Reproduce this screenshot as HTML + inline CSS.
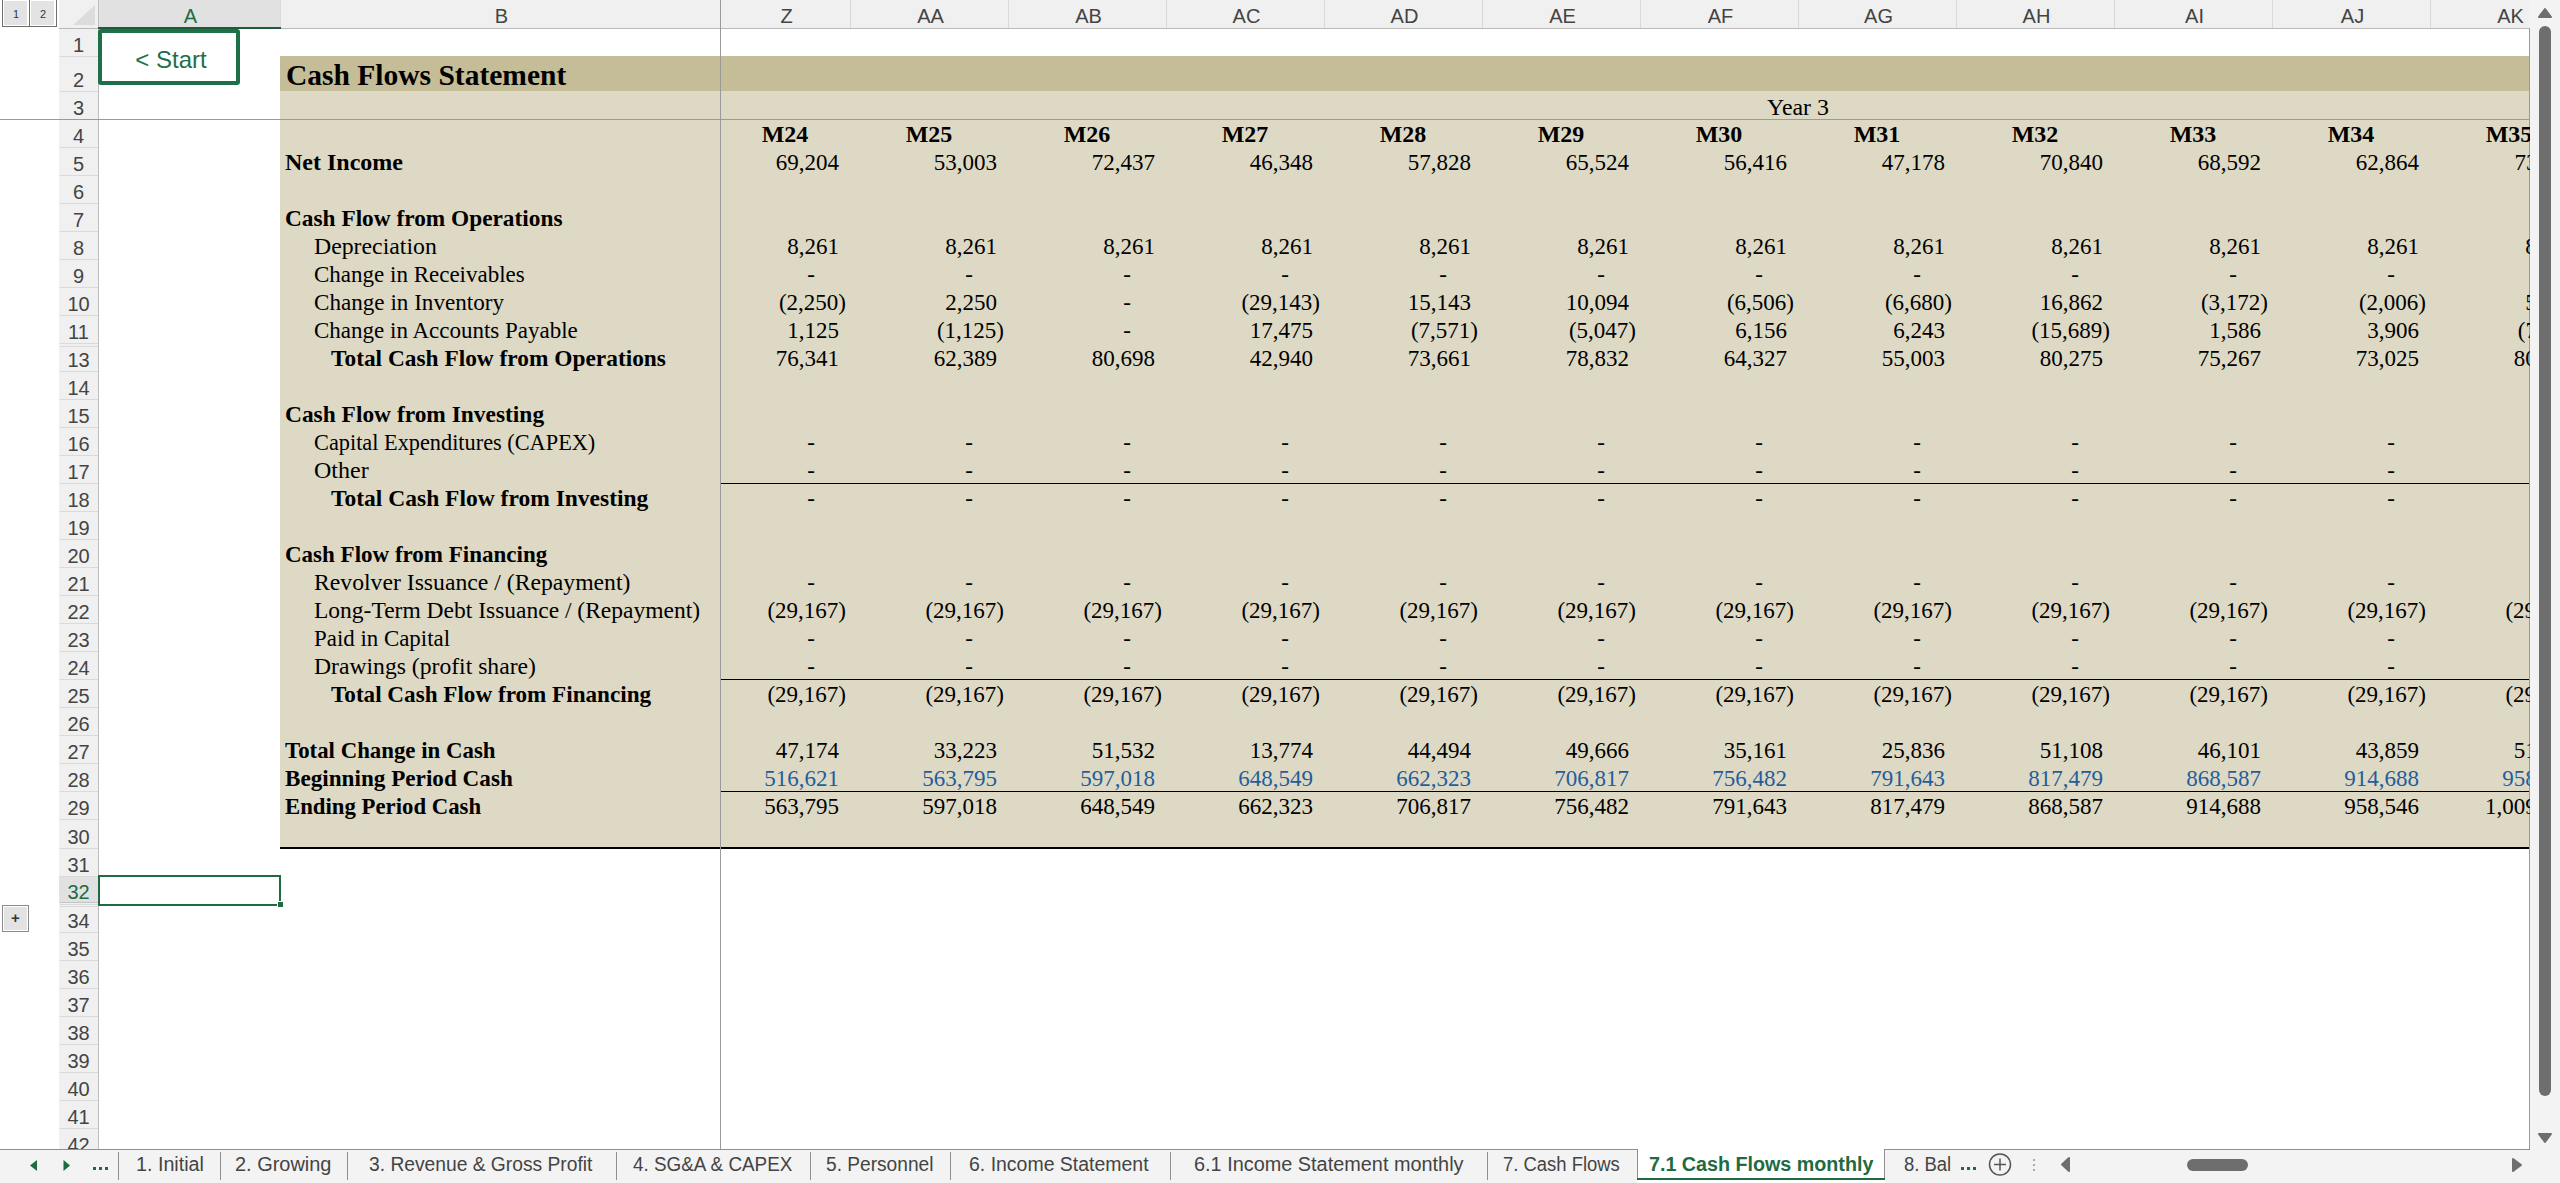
<!DOCTYPE html><html><head><meta charset='utf-8'><style>
*{margin:0;padding:0;box-sizing:border-box}
html,body{width:2560px;height:1183px;overflow:hidden;background:#fff;position:relative}
.a{position:absolute}
.sans{font-family:"Liberation Sans",sans-serif}
.serif{font-family:"Liberation Serif",serif}
.hdr{font-family:"Liberation Sans",sans-serif;font-size:20px;color:#444;white-space:nowrap;line-height:20px}
.cell{font-family:"Liberation Serif",serif;font-size:23px;color:#000;white-space:pre;line-height:24px}
.b{font-weight:bold}
.tab{font-family:"Liberation Sans",sans-serif;font-size:19.5px;color:#444;white-space:nowrap;line-height:20px}
</style></head><body>
<div class='a' style='left:59px;top:0;width:2471px;height:28px;background:#f0f0f0'></div>
<div class='a' style='left:98px;top:0;width:182px;height:28px;background:#e1e1e1'></div>
<div class='a' style='left:59px;top:28px;width:2471px;height:1px;background:#b9b9b9'></div>
<div class='a' style='left:98px;top:27px;width:183px;height:2px;background:#1e5b3a'></div>
<div class='a' style='left:98px;top:0;width:1px;height:28px;background:#d9d9d9'></div>
<div class='a' style='left:280px;top:0;width:1px;height:28px;background:#d9d9d9'></div>
<div class='a' style='left:850px;top:0;width:1px;height:28px;background:#d9d9d9'></div>
<div class='a' style='left:1008px;top:0;width:1px;height:28px;background:#d9d9d9'></div>
<div class='a' style='left:1166px;top:0;width:1px;height:28px;background:#d9d9d9'></div>
<div class='a' style='left:1324px;top:0;width:1px;height:28px;background:#d9d9d9'></div>
<div class='a' style='left:1482px;top:0;width:1px;height:28px;background:#d9d9d9'></div>
<div class='a' style='left:1640px;top:0;width:1px;height:28px;background:#d9d9d9'></div>
<div class='a' style='left:1798px;top:0;width:1px;height:28px;background:#d9d9d9'></div>
<div class='a' style='left:1956px;top:0;width:1px;height:28px;background:#d9d9d9'></div>
<div class='a' style='left:2114px;top:0;width:1px;height:28px;background:#d9d9d9'></div>
<div class='a' style='left:2272px;top:0;width:1px;height:28px;background:#d9d9d9'></div>
<div class='a' style='left:2430px;top:0;width:1px;height:28px;background:#d9d9d9'></div>
<svg class='a' style='left:59px;top:0' width='39' height='28'><polygon points='14,25 36,25 36,5' fill='#dcdcdc'/></svg>
<div class='a hdr' style='left:99.5px;width:182px;top:6px;text-align:center;color:#1e6b41'>A</div>
<div class='a hdr' style='left:281.5px;width:440px;top:6px;text-align:center;color:#444'>B</div>
<div class='a hdr' style='left:721.5px;width:130px;top:6px;text-align:center;color:#444'>Z</div>
<div class='a hdr' style='left:851.5px;width:158px;top:6px;text-align:center;color:#444'>AA</div>
<div class='a hdr' style='left:1009.5px;width:158px;top:6px;text-align:center;color:#444'>AB</div>
<div class='a hdr' style='left:1167.5px;width:158px;top:6px;text-align:center;color:#444'>AC</div>
<div class='a hdr' style='left:1325.5px;width:158px;top:6px;text-align:center;color:#444'>AD</div>
<div class='a hdr' style='left:1483.5px;width:158px;top:6px;text-align:center;color:#444'>AE</div>
<div class='a hdr' style='left:1641.5px;width:158px;top:6px;text-align:center;color:#444'>AF</div>
<div class='a hdr' style='left:1799.5px;width:158px;top:6px;text-align:center;color:#444'>AG</div>
<div class='a hdr' style='left:1957.5px;width:158px;top:6px;text-align:center;color:#444'>AH</div>
<div class='a hdr' style='left:2115.5px;width:158px;top:6px;text-align:center;color:#444'>AI</div>
<div class='a hdr' style='left:2273.5px;width:158px;top:6px;text-align:center;color:#444'>AJ</div>
<div class='a hdr' style='left:2431.5px;width:158px;top:6px;text-align:center;color:#444'>AK</div>
<div class='a' style='left:2px;top:-1px;width:55px;height:28px;border:1px solid #6f6f6f;background:#fff'></div>
<div class='a' style='left:29px;top:0;width:1px;height:27px;background:#6f6f6f'></div>
<div class='a' style='left:4px;top:1px;width:23px;height:24px;background:#e3e3e3'></div>
<div class='a' style='left:31px;top:1px;width:23px;height:24px;background:#e3e3e3'></div>
<div class='a sans' style='left:3px;top:8px;width:26px;text-align:center;font-size:11px;line-height:12px;color:#333'>1</div>
<div class='a sans' style='left:30px;top:8px;width:26px;text-align:center;font-size:11px;line-height:12px;color:#333'>2</div>
<div class='a' style='left:59px;top:29px;width:39px;height:1120px;background:#f0f0f0'></div>
<div class='a' style='left:98px;top:0;width:1px;height:1149px;background:#bdbdbd'></div>
<div class='a' style='left:59px;top:876px;width:39px;height:27px;background:#e1e1e1'></div>
<div class='a' style='left:60px;top:56px;width:38px;height:1px;background:#dadada'></div>
<div class='a hdr' style='left:59px;width:39px;top:35px;text-align:center;color:#444'>1</div>
<div class='a' style='left:60px;top:91px;width:38px;height:1px;background:#dadada'></div>
<div class='a hdr' style='left:59px;width:39px;top:70px;text-align:center;color:#444'>2</div>
<div class='a' style='left:60px;top:119px;width:38px;height:1px;background:#dadada'></div>
<div class='a hdr' style='left:59px;width:39px;top:98px;text-align:center;color:#444'>3</div>
<div class='a' style='left:60px;top:147px;width:38px;height:1px;background:#dadada'></div>
<div class='a hdr' style='left:59px;width:39px;top:126px;text-align:center;color:#444'>4</div>
<div class='a' style='left:60px;top:175px;width:38px;height:1px;background:#dadada'></div>
<div class='a hdr' style='left:59px;width:39px;top:154px;text-align:center;color:#444'>5</div>
<div class='a' style='left:60px;top:203px;width:38px;height:1px;background:#dadada'></div>
<div class='a hdr' style='left:59px;width:39px;top:182px;text-align:center;color:#444'>6</div>
<div class='a' style='left:60px;top:231px;width:38px;height:1px;background:#dadada'></div>
<div class='a hdr' style='left:59px;width:39px;top:210px;text-align:center;color:#444'>7</div>
<div class='a' style='left:60px;top:259px;width:38px;height:1px;background:#dadada'></div>
<div class='a hdr' style='left:59px;width:39px;top:238px;text-align:center;color:#444'>8</div>
<div class='a' style='left:60px;top:287px;width:38px;height:1px;background:#dadada'></div>
<div class='a hdr' style='left:59px;width:39px;top:266px;text-align:center;color:#444'>9</div>
<div class='a' style='left:60px;top:315px;width:38px;height:1px;background:#dadada'></div>
<div class='a hdr' style='left:59px;width:39px;top:294px;text-align:center;color:#444'>10</div>
<div class='a' style='left:60px;top:343px;width:38px;height:1px;background:#dadada'></div>
<div class='a hdr' style='left:59px;width:39px;top:322px;text-align:center;color:#444'>11</div>
<div class='a' style='left:60px;top:346px;width:38px;height:1px;background:#dadada'></div>
<div class='a' style='left:60px;top:371px;width:38px;height:1px;background:#dadada'></div>
<div class='a hdr' style='left:59px;width:39px;top:350px;text-align:center;color:#444'>13</div>
<div class='a' style='left:60px;top:399px;width:38px;height:1px;background:#dadada'></div>
<div class='a hdr' style='left:59px;width:39px;top:378px;text-align:center;color:#444'>14</div>
<div class='a' style='left:60px;top:427px;width:38px;height:1px;background:#dadada'></div>
<div class='a hdr' style='left:59px;width:39px;top:406px;text-align:center;color:#444'>15</div>
<div class='a' style='left:60px;top:455px;width:38px;height:1px;background:#dadada'></div>
<div class='a hdr' style='left:59px;width:39px;top:434px;text-align:center;color:#444'>16</div>
<div class='a' style='left:60px;top:483px;width:38px;height:1px;background:#dadada'></div>
<div class='a hdr' style='left:59px;width:39px;top:462px;text-align:center;color:#444'>17</div>
<div class='a' style='left:60px;top:511px;width:38px;height:1px;background:#dadada'></div>
<div class='a hdr' style='left:59px;width:39px;top:490px;text-align:center;color:#444'>18</div>
<div class='a' style='left:60px;top:539px;width:38px;height:1px;background:#dadada'></div>
<div class='a hdr' style='left:59px;width:39px;top:518px;text-align:center;color:#444'>19</div>
<div class='a' style='left:60px;top:567px;width:38px;height:1px;background:#dadada'></div>
<div class='a hdr' style='left:59px;width:39px;top:546px;text-align:center;color:#444'>20</div>
<div class='a' style='left:60px;top:595px;width:38px;height:1px;background:#dadada'></div>
<div class='a hdr' style='left:59px;width:39px;top:574px;text-align:center;color:#444'>21</div>
<div class='a' style='left:60px;top:623px;width:38px;height:1px;background:#dadada'></div>
<div class='a hdr' style='left:59px;width:39px;top:602px;text-align:center;color:#444'>22</div>
<div class='a' style='left:60px;top:651px;width:38px;height:1px;background:#dadada'></div>
<div class='a hdr' style='left:59px;width:39px;top:630px;text-align:center;color:#444'>23</div>
<div class='a' style='left:60px;top:679px;width:38px;height:1px;background:#dadada'></div>
<div class='a hdr' style='left:59px;width:39px;top:658px;text-align:center;color:#444'>24</div>
<div class='a' style='left:60px;top:707px;width:38px;height:1px;background:#dadada'></div>
<div class='a hdr' style='left:59px;width:39px;top:686px;text-align:center;color:#444'>25</div>
<div class='a' style='left:60px;top:735px;width:38px;height:1px;background:#dadada'></div>
<div class='a hdr' style='left:59px;width:39px;top:714px;text-align:center;color:#444'>26</div>
<div class='a' style='left:60px;top:763px;width:38px;height:1px;background:#dadada'></div>
<div class='a hdr' style='left:59px;width:39px;top:742px;text-align:center;color:#444'>27</div>
<div class='a' style='left:60px;top:791px;width:38px;height:1px;background:#dadada'></div>
<div class='a hdr' style='left:59px;width:39px;top:770px;text-align:center;color:#444'>28</div>
<div class='a' style='left:60px;top:819px;width:38px;height:1px;background:#dadada'></div>
<div class='a hdr' style='left:59px;width:39px;top:798px;text-align:center;color:#444'>29</div>
<div class='a' style='left:60px;top:848px;width:38px;height:1px;background:#dadada'></div>
<div class='a hdr' style='left:59px;width:39px;top:827px;text-align:center;color:#444'>30</div>
<div class='a' style='left:60px;top:876px;width:38px;height:1px;background:#dadada'></div>
<div class='a hdr' style='left:59px;width:39px;top:855px;text-align:center;color:#444'>31</div>
<div class='a' style='left:60px;top:904px;width:38px;height:1px;background:#dadada'></div>
<div class='a hdr' style='left:59px;width:39px;top:882px;text-align:center;color:#1e6b41'>32</div>
<div class='a' style='left:60px;top:902px;width:38px;height:1px;background:#c4c4c4'></div>
<div class='a' style='left:60px;top:906px;width:38px;height:1px;background:#dadada'></div>
<div class='a' style='left:60px;top:932px;width:38px;height:1px;background:#dadada'></div>
<div class='a hdr' style='left:59px;width:39px;top:911px;text-align:center;color:#444'>34</div>
<div class='a' style='left:60px;top:960px;width:38px;height:1px;background:#dadada'></div>
<div class='a hdr' style='left:59px;width:39px;top:939px;text-align:center;color:#444'>35</div>
<div class='a' style='left:60px;top:988px;width:38px;height:1px;background:#dadada'></div>
<div class='a hdr' style='left:59px;width:39px;top:967px;text-align:center;color:#444'>36</div>
<div class='a' style='left:60px;top:1016px;width:38px;height:1px;background:#dadada'></div>
<div class='a hdr' style='left:59px;width:39px;top:995px;text-align:center;color:#444'>37</div>
<div class='a' style='left:60px;top:1044px;width:38px;height:1px;background:#dadada'></div>
<div class='a hdr' style='left:59px;width:39px;top:1023px;text-align:center;color:#444'>38</div>
<div class='a' style='left:60px;top:1072px;width:38px;height:1px;background:#dadada'></div>
<div class='a hdr' style='left:59px;width:39px;top:1051px;text-align:center;color:#444'>39</div>
<div class='a' style='left:60px;top:1100px;width:38px;height:1px;background:#dadada'></div>
<div class='a hdr' style='left:59px;width:39px;top:1079px;text-align:center;color:#444'>40</div>
<div class='a' style='left:60px;top:1128px;width:38px;height:1px;background:#dadada'></div>
<div class='a hdr' style='left:59px;width:39px;top:1107px;text-align:center;color:#444'>41</div>
<div class='a hdr' style='left:59px;width:39px;top:1135px;text-align:center;color:#444'>42</div>
<div class='a' style='left:280px;top:56px;width:2249px;height:35px;background:#c4bd97'></div>
<div class='a' style='left:280px;top:91px;width:2249px;height:756px;background:#ddd9c4'></div>
<div class='a' style='left:280px;top:847px;width:2249px;height:2px;background:#000'></div>
<div class='a' style='left:720px;top:483px;width:1809px;height:1px;background:#000'></div>
<div class='a' style='left:720px;top:679px;width:1809px;height:1px;background:#000'></div>
<div class='a' style='left:720px;top:791px;width:1809px;height:1px;background:#000'></div>
<div class='a' style='left:0;top:119px;width:2530px;height:1px;background:#9a9a9a'></div>
<div class='a' style='left:720px;top:0;width:1px;height:1149px;background:#9a9a9a'></div>
<div class='a' style='left:2529px;top:28px;width:1px;height:1122px;background:#9a9a9a'></div>
<div class='a' style='left:280px;top:28px;width:2250px;height:1121px;overflow:hidden'>
<div class='a cell' style='left:440px;width:119px;text-align:right;top:123px;color:#000'>69,204</div><div class='a cell' style='left:570px;width:147px;text-align:right;top:123px;color:#000'>53,003</div><div class='a cell' style='left:728px;width:147px;text-align:right;top:123px;color:#000'>72,437</div><div class='a cell' style='left:886px;width:147px;text-align:right;top:123px;color:#000'>46,348</div><div class='a cell' style='left:1044px;width:147px;text-align:right;top:123px;color:#000'>57,828</div><div class='a cell' style='left:1202px;width:147px;text-align:right;top:123px;color:#000'>65,524</div><div class='a cell' style='left:1360px;width:147px;text-align:right;top:123px;color:#000'>56,416</div><div class='a cell' style='left:1518px;width:147px;text-align:right;top:123px;color:#000'>47,178</div><div class='a cell' style='left:1676px;width:147px;text-align:right;top:123px;color:#000'>70,840</div><div class='a cell' style='left:1834px;width:147px;text-align:right;top:123px;color:#000'>68,592</div><div class='a cell' style='left:1992px;width:147px;text-align:right;top:123px;color:#000'>62,864</div><div class='a cell' style='left:2150px;width:147px;text-align:right;top:123px;color:#000'>73,118</div><div class='a cell' style='left:440px;width:119px;text-align:right;top:207px;color:#000'>8,261</div><div class='a cell' style='left:570px;width:147px;text-align:right;top:207px;color:#000'>8,261</div><div class='a cell' style='left:728px;width:147px;text-align:right;top:207px;color:#000'>8,261</div><div class='a cell' style='left:886px;width:147px;text-align:right;top:207px;color:#000'>8,261</div><div class='a cell' style='left:1044px;width:147px;text-align:right;top:207px;color:#000'>8,261</div><div class='a cell' style='left:1202px;width:147px;text-align:right;top:207px;color:#000'>8,261</div><div class='a cell' style='left:1360px;width:147px;text-align:right;top:207px;color:#000'>8,261</div><div class='a cell' style='left:1518px;width:147px;text-align:right;top:207px;color:#000'>8,261</div><div class='a cell' style='left:1676px;width:147px;text-align:right;top:207px;color:#000'>8,261</div><div class='a cell' style='left:1834px;width:147px;text-align:right;top:207px;color:#000'>8,261</div><div class='a cell' style='left:1992px;width:147px;text-align:right;top:207px;color:#000'>8,261</div><div class='a cell' style='left:2150px;width:147px;text-align:right;top:207px;color:#000'>8,261</div><div class='a cell' style='left:440px;width:95px;text-align:right;top:235px;color:#000'>-</div><div class='a cell' style='left:570px;width:123px;text-align:right;top:235px;color:#000'>-</div><div class='a cell' style='left:728px;width:123px;text-align:right;top:235px;color:#000'>-</div><div class='a cell' style='left:886px;width:123px;text-align:right;top:235px;color:#000'>-</div><div class='a cell' style='left:1044px;width:123px;text-align:right;top:235px;color:#000'>-</div><div class='a cell' style='left:1202px;width:123px;text-align:right;top:235px;color:#000'>-</div><div class='a cell' style='left:1360px;width:123px;text-align:right;top:235px;color:#000'>-</div><div class='a cell' style='left:1518px;width:123px;text-align:right;top:235px;color:#000'>-</div><div class='a cell' style='left:1676px;width:123px;text-align:right;top:235px;color:#000'>-</div><div class='a cell' style='left:1834px;width:123px;text-align:right;top:235px;color:#000'>-</div><div class='a cell' style='left:1992px;width:123px;text-align:right;top:235px;color:#000'>-</div><div class='a cell' style='left:2150px;width:123px;text-align:right;top:235px;color:#000'>-</div><div class='a cell' style='left:440px;width:126px;text-align:right;top:263px;color:#000'>(2,250)</div><div class='a cell' style='left:570px;width:147px;text-align:right;top:263px;color:#000'>2,250</div><div class='a cell' style='left:728px;width:123px;text-align:right;top:263px;color:#000'>-</div><div class='a cell' style='left:886px;width:154px;text-align:right;top:263px;color:#000'>(29,143)</div><div class='a cell' style='left:1044px;width:147px;text-align:right;top:263px;color:#000'>15,143</div><div class='a cell' style='left:1202px;width:147px;text-align:right;top:263px;color:#000'>10,094</div><div class='a cell' style='left:1360px;width:154px;text-align:right;top:263px;color:#000'>(6,506)</div><div class='a cell' style='left:1518px;width:154px;text-align:right;top:263px;color:#000'>(6,680)</div><div class='a cell' style='left:1676px;width:147px;text-align:right;top:263px;color:#000'>16,862</div><div class='a cell' style='left:1834px;width:154px;text-align:right;top:263px;color:#000'>(3,172)</div><div class='a cell' style='left:1992px;width:154px;text-align:right;top:263px;color:#000'>(2,006)</div><div class='a cell' style='left:2150px;width:147px;text-align:right;top:263px;color:#000'>5,504</div><div class='a cell' style='left:440px;width:119px;text-align:right;top:291px;color:#000'>1,125</div><div class='a cell' style='left:570px;width:154px;text-align:right;top:291px;color:#000'>(1,125)</div><div class='a cell' style='left:728px;width:123px;text-align:right;top:291px;color:#000'>-</div><div class='a cell' style='left:886px;width:147px;text-align:right;top:291px;color:#000'>17,475</div><div class='a cell' style='left:1044px;width:154px;text-align:right;top:291px;color:#000'>(7,571)</div><div class='a cell' style='left:1202px;width:154px;text-align:right;top:291px;color:#000'>(5,047)</div><div class='a cell' style='left:1360px;width:147px;text-align:right;top:291px;color:#000'>6,156</div><div class='a cell' style='left:1518px;width:147px;text-align:right;top:291px;color:#000'>6,243</div><div class='a cell' style='left:1676px;width:154px;text-align:right;top:291px;color:#000'>(15,689)</div><div class='a cell' style='left:1834px;width:147px;text-align:right;top:291px;color:#000'>1,586</div><div class='a cell' style='left:1992px;width:147px;text-align:right;top:291px;color:#000'>3,906</div><div class='a cell' style='left:2150px;width:154px;text-align:right;top:291px;color:#000'>(7,711)</div><div class='a cell' style='left:440px;width:119px;text-align:right;top:319px;color:#000'>76,341</div><div class='a cell' style='left:570px;width:147px;text-align:right;top:319px;color:#000'>62,389</div><div class='a cell' style='left:728px;width:147px;text-align:right;top:319px;color:#000'>80,698</div><div class='a cell' style='left:886px;width:147px;text-align:right;top:319px;color:#000'>42,940</div><div class='a cell' style='left:1044px;width:147px;text-align:right;top:319px;color:#000'>73,661</div><div class='a cell' style='left:1202px;width:147px;text-align:right;top:319px;color:#000'>78,832</div><div class='a cell' style='left:1360px;width:147px;text-align:right;top:319px;color:#000'>64,327</div><div class='a cell' style='left:1518px;width:147px;text-align:right;top:319px;color:#000'>55,003</div><div class='a cell' style='left:1676px;width:147px;text-align:right;top:319px;color:#000'>80,275</div><div class='a cell' style='left:1834px;width:147px;text-align:right;top:319px;color:#000'>75,267</div><div class='a cell' style='left:1992px;width:147px;text-align:right;top:319px;color:#000'>73,025</div><div class='a cell' style='left:2150px;width:147px;text-align:right;top:319px;color:#000'>80,172</div><div class='a cell' style='left:440px;width:95px;text-align:right;top:403px;color:#000'>-</div><div class='a cell' style='left:570px;width:123px;text-align:right;top:403px;color:#000'>-</div><div class='a cell' style='left:728px;width:123px;text-align:right;top:403px;color:#000'>-</div><div class='a cell' style='left:886px;width:123px;text-align:right;top:403px;color:#000'>-</div><div class='a cell' style='left:1044px;width:123px;text-align:right;top:403px;color:#000'>-</div><div class='a cell' style='left:1202px;width:123px;text-align:right;top:403px;color:#000'>-</div><div class='a cell' style='left:1360px;width:123px;text-align:right;top:403px;color:#000'>-</div><div class='a cell' style='left:1518px;width:123px;text-align:right;top:403px;color:#000'>-</div><div class='a cell' style='left:1676px;width:123px;text-align:right;top:403px;color:#000'>-</div><div class='a cell' style='left:1834px;width:123px;text-align:right;top:403px;color:#000'>-</div><div class='a cell' style='left:1992px;width:123px;text-align:right;top:403px;color:#000'>-</div><div class='a cell' style='left:2150px;width:123px;text-align:right;top:403px;color:#000'>-</div><div class='a cell' style='left:440px;width:95px;text-align:right;top:431px;color:#000'>-</div><div class='a cell' style='left:570px;width:123px;text-align:right;top:431px;color:#000'>-</div><div class='a cell' style='left:728px;width:123px;text-align:right;top:431px;color:#000'>-</div><div class='a cell' style='left:886px;width:123px;text-align:right;top:431px;color:#000'>-</div><div class='a cell' style='left:1044px;width:123px;text-align:right;top:431px;color:#000'>-</div><div class='a cell' style='left:1202px;width:123px;text-align:right;top:431px;color:#000'>-</div><div class='a cell' style='left:1360px;width:123px;text-align:right;top:431px;color:#000'>-</div><div class='a cell' style='left:1518px;width:123px;text-align:right;top:431px;color:#000'>-</div><div class='a cell' style='left:1676px;width:123px;text-align:right;top:431px;color:#000'>-</div><div class='a cell' style='left:1834px;width:123px;text-align:right;top:431px;color:#000'>-</div><div class='a cell' style='left:1992px;width:123px;text-align:right;top:431px;color:#000'>-</div><div class='a cell' style='left:2150px;width:123px;text-align:right;top:431px;color:#000'>-</div><div class='a cell' style='left:440px;width:95px;text-align:right;top:459px;color:#000'>-</div><div class='a cell' style='left:570px;width:123px;text-align:right;top:459px;color:#000'>-</div><div class='a cell' style='left:728px;width:123px;text-align:right;top:459px;color:#000'>-</div><div class='a cell' style='left:886px;width:123px;text-align:right;top:459px;color:#000'>-</div><div class='a cell' style='left:1044px;width:123px;text-align:right;top:459px;color:#000'>-</div><div class='a cell' style='left:1202px;width:123px;text-align:right;top:459px;color:#000'>-</div><div class='a cell' style='left:1360px;width:123px;text-align:right;top:459px;color:#000'>-</div><div class='a cell' style='left:1518px;width:123px;text-align:right;top:459px;color:#000'>-</div><div class='a cell' style='left:1676px;width:123px;text-align:right;top:459px;color:#000'>-</div><div class='a cell' style='left:1834px;width:123px;text-align:right;top:459px;color:#000'>-</div><div class='a cell' style='left:1992px;width:123px;text-align:right;top:459px;color:#000'>-</div><div class='a cell' style='left:2150px;width:123px;text-align:right;top:459px;color:#000'>-</div><div class='a cell' style='left:440px;width:95px;text-align:right;top:543px;color:#000'>-</div><div class='a cell' style='left:570px;width:123px;text-align:right;top:543px;color:#000'>-</div><div class='a cell' style='left:728px;width:123px;text-align:right;top:543px;color:#000'>-</div><div class='a cell' style='left:886px;width:123px;text-align:right;top:543px;color:#000'>-</div><div class='a cell' style='left:1044px;width:123px;text-align:right;top:543px;color:#000'>-</div><div class='a cell' style='left:1202px;width:123px;text-align:right;top:543px;color:#000'>-</div><div class='a cell' style='left:1360px;width:123px;text-align:right;top:543px;color:#000'>-</div><div class='a cell' style='left:1518px;width:123px;text-align:right;top:543px;color:#000'>-</div><div class='a cell' style='left:1676px;width:123px;text-align:right;top:543px;color:#000'>-</div><div class='a cell' style='left:1834px;width:123px;text-align:right;top:543px;color:#000'>-</div><div class='a cell' style='left:1992px;width:123px;text-align:right;top:543px;color:#000'>-</div><div class='a cell' style='left:2150px;width:123px;text-align:right;top:543px;color:#000'>-</div><div class='a cell' style='left:440px;width:126px;text-align:right;top:571px;color:#000'>(29,167)</div><div class='a cell' style='left:570px;width:154px;text-align:right;top:571px;color:#000'>(29,167)</div><div class='a cell' style='left:728px;width:154px;text-align:right;top:571px;color:#000'>(29,167)</div><div class='a cell' style='left:886px;width:154px;text-align:right;top:571px;color:#000'>(29,167)</div><div class='a cell' style='left:1044px;width:154px;text-align:right;top:571px;color:#000'>(29,167)</div><div class='a cell' style='left:1202px;width:154px;text-align:right;top:571px;color:#000'>(29,167)</div><div class='a cell' style='left:1360px;width:154px;text-align:right;top:571px;color:#000'>(29,167)</div><div class='a cell' style='left:1518px;width:154px;text-align:right;top:571px;color:#000'>(29,167)</div><div class='a cell' style='left:1676px;width:154px;text-align:right;top:571px;color:#000'>(29,167)</div><div class='a cell' style='left:1834px;width:154px;text-align:right;top:571px;color:#000'>(29,167)</div><div class='a cell' style='left:1992px;width:154px;text-align:right;top:571px;color:#000'>(29,167)</div><div class='a cell' style='left:2150px;width:154px;text-align:right;top:571px;color:#000'>(29,167)</div><div class='a cell' style='left:440px;width:95px;text-align:right;top:599px;color:#000'>-</div><div class='a cell' style='left:570px;width:123px;text-align:right;top:599px;color:#000'>-</div><div class='a cell' style='left:728px;width:123px;text-align:right;top:599px;color:#000'>-</div><div class='a cell' style='left:886px;width:123px;text-align:right;top:599px;color:#000'>-</div><div class='a cell' style='left:1044px;width:123px;text-align:right;top:599px;color:#000'>-</div><div class='a cell' style='left:1202px;width:123px;text-align:right;top:599px;color:#000'>-</div><div class='a cell' style='left:1360px;width:123px;text-align:right;top:599px;color:#000'>-</div><div class='a cell' style='left:1518px;width:123px;text-align:right;top:599px;color:#000'>-</div><div class='a cell' style='left:1676px;width:123px;text-align:right;top:599px;color:#000'>-</div><div class='a cell' style='left:1834px;width:123px;text-align:right;top:599px;color:#000'>-</div><div class='a cell' style='left:1992px;width:123px;text-align:right;top:599px;color:#000'>-</div><div class='a cell' style='left:2150px;width:123px;text-align:right;top:599px;color:#000'>-</div><div class='a cell' style='left:440px;width:95px;text-align:right;top:627px;color:#000'>-</div><div class='a cell' style='left:570px;width:123px;text-align:right;top:627px;color:#000'>-</div><div class='a cell' style='left:728px;width:123px;text-align:right;top:627px;color:#000'>-</div><div class='a cell' style='left:886px;width:123px;text-align:right;top:627px;color:#000'>-</div><div class='a cell' style='left:1044px;width:123px;text-align:right;top:627px;color:#000'>-</div><div class='a cell' style='left:1202px;width:123px;text-align:right;top:627px;color:#000'>-</div><div class='a cell' style='left:1360px;width:123px;text-align:right;top:627px;color:#000'>-</div><div class='a cell' style='left:1518px;width:123px;text-align:right;top:627px;color:#000'>-</div><div class='a cell' style='left:1676px;width:123px;text-align:right;top:627px;color:#000'>-</div><div class='a cell' style='left:1834px;width:123px;text-align:right;top:627px;color:#000'>-</div><div class='a cell' style='left:1992px;width:123px;text-align:right;top:627px;color:#000'>-</div><div class='a cell' style='left:2150px;width:123px;text-align:right;top:627px;color:#000'>-</div><div class='a cell' style='left:440px;width:126px;text-align:right;top:655px;color:#000'>(29,167)</div><div class='a cell' style='left:570px;width:154px;text-align:right;top:655px;color:#000'>(29,167)</div><div class='a cell' style='left:728px;width:154px;text-align:right;top:655px;color:#000'>(29,167)</div><div class='a cell' style='left:886px;width:154px;text-align:right;top:655px;color:#000'>(29,167)</div><div class='a cell' style='left:1044px;width:154px;text-align:right;top:655px;color:#000'>(29,167)</div><div class='a cell' style='left:1202px;width:154px;text-align:right;top:655px;color:#000'>(29,167)</div><div class='a cell' style='left:1360px;width:154px;text-align:right;top:655px;color:#000'>(29,167)</div><div class='a cell' style='left:1518px;width:154px;text-align:right;top:655px;color:#000'>(29,167)</div><div class='a cell' style='left:1676px;width:154px;text-align:right;top:655px;color:#000'>(29,167)</div><div class='a cell' style='left:1834px;width:154px;text-align:right;top:655px;color:#000'>(29,167)</div><div class='a cell' style='left:1992px;width:154px;text-align:right;top:655px;color:#000'>(29,167)</div><div class='a cell' style='left:2150px;width:154px;text-align:right;top:655px;color:#000'>(29,167)</div><div class='a cell' style='left:440px;width:119px;text-align:right;top:711px;color:#000'>47,174</div><div class='a cell' style='left:570px;width:147px;text-align:right;top:711px;color:#000'>33,223</div><div class='a cell' style='left:728px;width:147px;text-align:right;top:711px;color:#000'>51,532</div><div class='a cell' style='left:886px;width:147px;text-align:right;top:711px;color:#000'>13,774</div><div class='a cell' style='left:1044px;width:147px;text-align:right;top:711px;color:#000'>44,494</div><div class='a cell' style='left:1202px;width:147px;text-align:right;top:711px;color:#000'>49,666</div><div class='a cell' style='left:1360px;width:147px;text-align:right;top:711px;color:#000'>35,161</div><div class='a cell' style='left:1518px;width:147px;text-align:right;top:711px;color:#000'>25,836</div><div class='a cell' style='left:1676px;width:147px;text-align:right;top:711px;color:#000'>51,108</div><div class='a cell' style='left:1834px;width:147px;text-align:right;top:711px;color:#000'>46,101</div><div class='a cell' style='left:1992px;width:147px;text-align:right;top:711px;color:#000'>43,859</div><div class='a cell' style='left:2150px;width:147px;text-align:right;top:711px;color:#000'>51,005</div><div class='a cell' style='left:440px;width:119px;text-align:right;top:739px;color:#1f5e9c'>516,621</div><div class='a cell' style='left:570px;width:147px;text-align:right;top:739px;color:#1f5e9c'>563,795</div><div class='a cell' style='left:728px;width:147px;text-align:right;top:739px;color:#1f5e9c'>597,018</div><div class='a cell' style='left:886px;width:147px;text-align:right;top:739px;color:#1f5e9c'>648,549</div><div class='a cell' style='left:1044px;width:147px;text-align:right;top:739px;color:#1f5e9c'>662,323</div><div class='a cell' style='left:1202px;width:147px;text-align:right;top:739px;color:#1f5e9c'>706,817</div><div class='a cell' style='left:1360px;width:147px;text-align:right;top:739px;color:#1f5e9c'>756,482</div><div class='a cell' style='left:1518px;width:147px;text-align:right;top:739px;color:#1f5e9c'>791,643</div><div class='a cell' style='left:1676px;width:147px;text-align:right;top:739px;color:#1f5e9c'>817,479</div><div class='a cell' style='left:1834px;width:147px;text-align:right;top:739px;color:#1f5e9c'>868,587</div><div class='a cell' style='left:1992px;width:147px;text-align:right;top:739px;color:#1f5e9c'>914,688</div><div class='a cell' style='left:2150px;width:147px;text-align:right;top:739px;color:#1f5e9c'>958,546</div><div class='a cell' style='left:440px;width:119px;text-align:right;top:767px;color:#000'>563,795</div><div class='a cell' style='left:570px;width:147px;text-align:right;top:767px;color:#000'>597,018</div><div class='a cell' style='left:728px;width:147px;text-align:right;top:767px;color:#000'>648,549</div><div class='a cell' style='left:886px;width:147px;text-align:right;top:767px;color:#000'>662,323</div><div class='a cell' style='left:1044px;width:147px;text-align:right;top:767px;color:#000'>706,817</div><div class='a cell' style='left:1202px;width:147px;text-align:right;top:767px;color:#000'>756,482</div><div class='a cell' style='left:1360px;width:147px;text-align:right;top:767px;color:#000'>791,643</div><div class='a cell' style='left:1518px;width:147px;text-align:right;top:767px;color:#000'>817,479</div><div class='a cell' style='left:1676px;width:147px;text-align:right;top:767px;color:#000'>868,587</div><div class='a cell' style='left:1834px;width:147px;text-align:right;top:767px;color:#000'>914,688</div><div class='a cell' style='left:1992px;width:147px;text-align:right;top:767px;color:#000'>958,546</div><div class='a cell' style='left:2150px;width:147px;text-align:right;top:767px;color:#000'>1,009,551</div><div class='a cell b' style='left:440px;width:130px;text-align:center;top:95px;transform:scaleX(1.043)'>M24</div><div class='a cell b' style='left:570px;width:158px;text-align:center;top:95px;transform:scaleX(1.043)'>M25</div><div class='a cell b' style='left:728px;width:158px;text-align:center;top:95px;transform:scaleX(1.043)'>M26</div><div class='a cell b' style='left:886px;width:158px;text-align:center;top:95px;transform:scaleX(1.043)'>M27</div><div class='a cell b' style='left:1044px;width:158px;text-align:center;top:95px;transform:scaleX(1.043)'>M28</div><div class='a cell b' style='left:1202px;width:158px;text-align:center;top:95px;transform:scaleX(1.043)'>M29</div><div class='a cell b' style='left:1360px;width:158px;text-align:center;top:95px;transform:scaleX(1.043)'>M30</div><div class='a cell b' style='left:1518px;width:158px;text-align:center;top:95px;transform:scaleX(1.043)'>M31</div><div class='a cell b' style='left:1676px;width:158px;text-align:center;top:95px;transform:scaleX(1.043)'>M32</div><div class='a cell b' style='left:1834px;width:158px;text-align:center;top:95px;transform:scaleX(1.043)'>M33</div><div class='a cell b' style='left:1992px;width:158px;text-align:center;top:95px;transform:scaleX(1.043)'>M34</div><div class='a cell b' style='left:2150px;width:158px;text-align:center;top:95px;transform:scaleX(1.043)'>M35</div>
</div>
<div class='a cell b' style='left:285px;top:151px;color:#000;transform:scaleX(1.044);transform-origin:0 0'>Net Income</div>
<div class='a cell b' style='left:285px;top:207px;color:#000;transform:scaleX(1.014);transform-origin:0 0'>Cash Flow from Operations</div>
<div class='a cell' style='left:314px;top:235px;color:#000;transform:scaleX(1.034);transform-origin:0 0'>Depreciation</div>
<div class='a cell' style='left:314px;top:263px;color:#000;transform:scaleX(1.0);transform-origin:0 0'>Change in Receivables</div>
<div class='a cell' style='left:314px;top:291px;color:#000;transform:scaleX(1.005);transform-origin:0 0'>Change in Inventory</div>
<div class='a cell' style='left:314px;top:319px;color:#000;transform:scaleX(1.0);transform-origin:0 0'>Change in Accounts Payable</div>
<div class='a cell b' style='left:331px;top:347px;color:#000;transform:scaleX(1.016);transform-origin:0 0'>Total Cash Flow from Operations</div>
<div class='a cell b' style='left:285px;top:403px;color:#000;transform:scaleX(1.018);transform-origin:0 0'>Cash Flow from Investing</div>
<div class='a cell' style='left:314px;top:431px;color:#000;transform:scaleX(0.97);transform-origin:0 0'>Capital Expenditures (CAPEX)</div>
<div class='a cell' style='left:314px;top:459px;color:#000;transform:scaleX(1.044);transform-origin:0 0'>Other</div>
<div class='a cell b' style='left:331px;top:487px;color:#000;transform:scaleX(1.022);transform-origin:0 0'>Total Cash Flow from Investing</div>
<div class='a cell b' style='left:285px;top:543px;color:#000;transform:scaleX(1.0);transform-origin:0 0'>Cash Flow from Financing</div>
<div class='a cell' style='left:314px;top:571px;color:#000;transform:scaleX(1.03);transform-origin:0 0'>Revolver Issuance / (Repayment)</div>
<div class='a cell' style='left:314px;top:599px;color:#000;transform:scaleX(1.022);transform-origin:0 0'>Long-Term Debt Issuance / (Repayment)</div>
<div class='a cell' style='left:314px;top:627px;color:#000;transform:scaleX(0.995);transform-origin:0 0'>Paid in Capital</div>
<div class='a cell' style='left:314px;top:655px;color:#000;transform:scaleX(1.028);transform-origin:0 0'>Drawings (profit share)</div>
<div class='a cell b' style='left:331px;top:683px;color:#000;transform:scaleX(1.006);transform-origin:0 0'>Total Cash Flow from Financing</div>
<div class='a cell b' style='left:285px;top:739px;color:#000;transform:scaleX(0.993);transform-origin:0 0'>Total Change in Cash</div>
<div class='a cell b' style='left:285px;top:767px;color:#000;transform:scaleX(1.007);transform-origin:0 0'>Beginning Period Cash</div>
<div class='a cell b' style='left:285px;top:795px;color:#000;transform:scaleX(0.99);transform-origin:0 0'>Ending Period Cash</div>
<div class='a serif b' style='left:286px;top:60px;font-size:29.5px;line-height:30px;white-space:pre'>Cash Flows Statement</div>
<div class='a cell' style='left:1698px;width:200px;text-align:center;top:96px;transform:scaleX(1.037)'>Year 3</div>
<div class='a' style='left:98px;top:29px;width:142px;height:56px;border:4px solid #1d7048;border-radius:3px;background:#fff'></div>
<div class='a' style='left:98px;top:27px;width:183px;height:2px;background:#1e5b3a'></div>
<div class='a sans' style='left:100px;width:142px;top:47px;text-align:center;font-size:24px;line-height:26px;color:#1d7048'>&lt; Start</div>
<div class='a' style='left:98px;top:875px;width:183px;height:31px;border:2px solid #1e6b41'></div>
<div class='a' style='left:277px;top:901px;width:7px;height:7px;background:#1e6b41;border:1px solid #fff'></div>
<div class='a' style='left:2px;top:905px;width:27px;height:27px;border:1px solid #8a8a8a;background:#fff'></div>
<div class='a' style='left:4px;top:907px;width:23px;height:23px;background:#e3e3e3'></div>
<div class='a sans b' style='left:2px;width:27px;top:910px;text-align:center;font-size:15px;line-height:16px;color:#333'>+</div>
<div class='a' style='left:2530px;top:0;width:30px;height:1149px;background:#f3f3f3'></div>
<svg class='a' style='left:2530px;top:0' width='30' height='1149'><polygon points='9,17 21,17 15,9' fill='#6e6e6e' stroke='#6e6e6e' stroke-width='2' stroke-linejoin='round'/><rect x='9' y='26' width='12' height='1070' rx='6' fill='#6e6e6e'/><polygon points='9,1134 21,1134 15,1142' fill='#6e6e6e' stroke='#6e6e6e' stroke-width='2' stroke-linejoin='round'/></svg>
<div class='a' style='left:0;top:1149px;width:2560px;height:34px;background:#f3f3f3'></div>
<div class='a' style='left:0;top:1149px;width:2530px;height:1px;background:#8f8f8f'></div>
<svg class='a' style='left:0;top:1149px' width='120' height='34'><polygon points='37,11 37,22 30,16.5' fill='#1e6b41'/><polygon points='63.5,11 63.5,22 70,16.5' fill='#1e6b41'/><rect x='93' y='18' width='3' height='3' fill='#1e6b41'/><rect x='99' y='18' width='3' height='3' fill='#1e6b41'/><rect x='105' y='18' width='3' height='3' fill='#1e6b41'/></svg>
<div class='a tab' style='left:135.7px;top:1154px;transform:scaleX(1.011);transform-origin:0 0'>1. Initial</div>
<div class='a tab' style='left:235.0px;top:1154px;transform:scaleX(1.022);transform-origin:0 0'>2. Growing</div>
<div class='a tab' style='left:369.4px;top:1154px;transform:scaleX(0.986);transform-origin:0 0'>3. Revenue &amp; Gross Profit</div>
<div class='a tab' style='left:633.0px;top:1154px;transform:scaleX(0.967);transform-origin:0 0'>4. SG&amp;A &amp; CAPEX</div>
<div class='a tab' style='left:826.0px;top:1154px;transform:scaleX(0.981);transform-origin:0 0'>5. Personnel</div>
<div class='a tab' style='left:969.4px;top:1154px;transform:scaleX(0.998);transform-origin:0 0'>6. Income Statement</div>
<div class='a tab' style='left:1193.5px;top:1154px;transform:scaleX(1.019);transform-origin:0 0'>6.1 Income Statement monthly</div>
<div class='a tab' style='left:1502.8px;top:1154px;transform:scaleX(0.945);transform-origin:0 0'>7. Cash Flows</div>
<div class='a' style='left:118px;top:1152px;width:1px;height:28px;background:#8f8f8f'></div>
<div class='a' style='left:220px;top:1152px;width:1px;height:28px;background:#8f8f8f'></div>
<div class='a' style='left:347px;top:1152px;width:1px;height:28px;background:#8f8f8f'></div>
<div class='a' style='left:616px;top:1152px;width:1px;height:28px;background:#8f8f8f'></div>
<div class='a' style='left:810px;top:1152px;width:1px;height:28px;background:#8f8f8f'></div>
<div class='a' style='left:950px;top:1152px;width:1px;height:28px;background:#8f8f8f'></div>
<div class='a' style='left:1170px;top:1152px;width:1px;height:28px;background:#8f8f8f'></div>
<div class='a' style='left:1487px;top:1152px;width:1px;height:28px;background:#8f8f8f'></div>
<div class='a' style='left:1637px;top:1149px;width:248px;height:34px;background:#fff'></div>
<div class='a' style='left:1637px;top:1149px;width:1px;height:30px;background:#8f8f8f'></div>
<div class='a' style='left:1884px;top:1149px;width:1px;height:30px;background:#8f8f8f'></div>
<div class='a' style='left:1637px;top:1178px;width:248px;height:2px;background:#1e6b41'></div>
<div class='a tab b' style='left:1649px;top:1154px;color:#1e6b41;transform:scaleX(1.01);transform-origin:0 0'>7.1 Cash Flows monthly</div>
<div class='a tab' style='left:1903.5px;top:1154px;transform:scaleX(0.947);transform-origin:0 0'>8. Bal</div>
<svg class='a' style='left:1955px;top:1149px' width='130' height='34'><rect x='6' y='18' width='3' height='3' fill='#1e6b41'/><rect x='12' y='18' width='3' height='3' fill='#1e6b41'/><rect x='18' y='18' width='3' height='3' fill='#1e6b41'/><circle cx='45' cy='15.5' r='10.5' fill='none' stroke='#555' stroke-width='1.5'/><line x1='39' y1='15.5' x2='51' y2='15.5' stroke='#555' stroke-width='1.5'/><line x1='45' y1='9.5' x2='45' y2='21.5' stroke='#555' stroke-width='1.5'/><rect x='78' y='10' width='2' height='2' fill='#aaa'/><rect x='78' y='15' width='2' height='2' fill='#aaa'/><rect x='78' y='20' width='2' height='2' fill='#aaa'/><polygon points='114,9 114,22 107,15.5' fill='#6e6e6e' stroke='#6e6e6e' stroke-width='2' stroke-linejoin='round'/></svg>
<svg class='a' style='left:2150px;top:1149px' width='410' height='34'><rect x='37' y='10' width='61' height='12' rx='6' fill='#6e6e6e'/><polygon points='363,10 363,22 371,16' fill='#6e6e6e' stroke='#6e6e6e' stroke-width='2' stroke-linejoin='round'/></svg>
</body></html>
